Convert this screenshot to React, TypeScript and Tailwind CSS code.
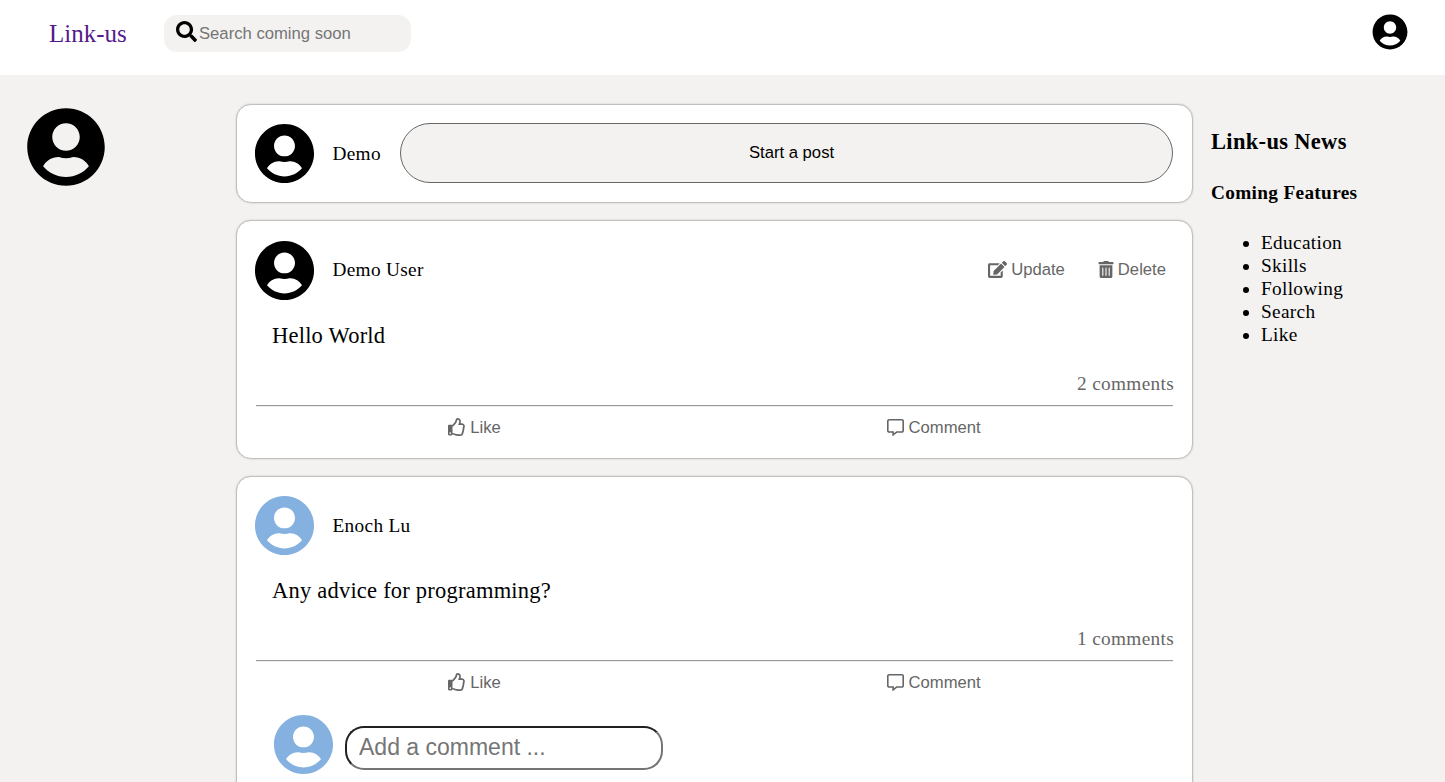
import type { ReactNode } from "react";
import {
  FaEdit,
  FaRegCommentAlt,
  FaRegThumbsUp,
  FaSearch,
  FaTrashAlt,
  FaUserCircle,
} from "react-icons/fa";

const features = ["Education", "Skills", "Following", "Search", "Like"];

function Card({ className = "", children }: { className?: string; children: ReactNode }) {
  return (
    <section
      className={`rounded-[15px] border border-[#c0c0c0] bg-white px-[18px] shadow-[0_0_2px_rgba(0,0,0,0.2)] ${className}`}
    >
      {children}
    </section>
  );
}

function Post({
  author,
  text,
  comments,
  own = false,
  avatarClass,
  className,
  children,
}: {
  author: string;
  text: string;
  comments: number;
  own?: boolean;
  avatarClass: string;
  className?: string;
  children?: ReactNode;
}) {
  return (
    <Card className={className}>
      <div className="flex h-[59px] items-center">
        <FaUserCircle className={`-m-px size-[61px] shrink-0 ${avatarClass}`} />
        <span className={own ? "mb-[2px] ml-[18.5px]" : "ml-[18.5px]"}>{author}</span>
        {own && (
          <div className="mb-[2px] ml-auto flex gap-[33px] pr-[8px] font-['Liberation_Sans',sans-serif] text-[16.67px] leading-[19px] tracking-normal text-[#666]">
            <button className="flex items-center gap-[4px]">
              <FaEdit className="h-[17px] w-[19px]" />
              Update
            </button>
            <button className="flex items-center gap-[4px]">
              <FaTrashAlt className="h-[17px] w-[16px]" />
              Delete
            </button>
          </div>
        )}
      </div>
      <p className="mt-[23px] ml-[17px] text-[22.5px] leading-[26px] tracking-[0.22px]">{text}</p>
      <p className="mt-[23px] text-right leading-[23px] text-[#666]">{comments} comments</p>
      <hr className="mt-[10px] mr-px ml-px border-t border-b border-t-[#999] border-b-[#eee]" />
      <div className="mt-[11px] flex justify-around font-['Liberation_Sans',sans-serif] text-[16.67px] leading-[20px] tracking-normal text-[#666]">
        <button className="flex items-center gap-[4px]">
          <FaRegThumbsUp className="mb-[2px] size-[18px]" />
          Like
        </button>
        <button className="flex items-center gap-[4px]">
          <FaRegCommentAlt className="mb-[2px] size-[17px]" />
          Comment
        </button>
      </div>
      {children}
    </Card>
  );
}

export default function App() {
  return (
    <div className="flex h-[782px] flex-col overflow-hidden bg-[#f3f2f0] font-['Liberation_Serif',serif] text-[19.3px] leading-[23px] tracking-[0.32px] text-black">
      <header className="flex h-[75px] shrink-0 items-start bg-white pl-[49px] pr-[37px] tracking-normal">
        <a className="mt-[19px] w-[115px] text-[25px] leading-[29px] text-[#551a8b]">Link-us</a>
        <div className="mt-[15px] flex h-[37px] w-[247px] items-center rounded-[13px] bg-[#f3f2f0] pl-[12px]">
          <FaSearch className="mb-[4px] size-[21px]" />
          <input
            placeholder="Search coming soon"
            className="ml-[2px] w-[190px] bg-transparent font-['Liberation_Sans',sans-serif] text-[16.67px] leading-[19px] outline-none placeholder:text-[#757575]"
          />
        </div>
        <FaUserCircle className="mt-[14px] ml-auto size-[36px]" />
      </header>
      <div className="flex min-h-0 flex-1 items-start">
        <aside className="w-[236px] shrink-0 pt-[32px] pl-[26px]">
          <FaUserCircle className="size-[80px]" />
        </aside>
        <main className="flex w-[957px] shrink-0 flex-col gap-[17px] pt-[29px]">
          <Card className="flex h-[99px] items-center">
            <FaUserCircle className="-m-px size-[61px] shrink-0" />
            <span className="ml-[18.5px] w-[67.5px]">Demo</span>
            <button className="mr-px mb-[2px] h-[60px] flex-1 rounded-full border border-[#666] bg-[#f3f2f0] pb-px pl-[10px] font-['Liberation_Sans',sans-serif] text-[16.67px] tracking-normal">
              Start a post
            </button>
          </Card>
          <Post
            author="Demo User"
            text="Hello World"
            comments={2}
            own
            avatarClass="text-black"
            className="h-[239px] pt-[20px]"
          />
          <Post
            author="Enoch Lu"
            text="Any advice for programming?"
            comments={1}
            avatarClass="text-[#84b1e0]"
            className="h-[340px] pt-[19px]"
          >
            <div className="mt-[22px] ml-[19px] flex items-center">
              <FaUserCircle className="-m-px size-[61px] text-[#84b1e0]" />
              <input
                placeholder="Add a comment ..."
                className="mt-[7px] ml-[12px] h-[44px] w-[318px] rounded-[19px] border-2 border-t-[#202020] border-r-[#757575] border-b-[#757575] border-l-[#202020] px-[12px] pb-[2px] font-['Liberation_Sans',sans-serif] text-[23px] tracking-normal outline-none placeholder:text-[#757575]"
              />
            </div>
          </Post>
        </main>
        <aside className="pt-[53px] pl-[18px]">
          <h3 className="text-[22.5px] leading-[27px] font-bold">Link-us News</h3>
          <h4 className="mt-[26px] leading-[23px] font-bold">Coming Features</h4>
          <ul className="mt-[27px] list-disc pl-[50px]">
            {features.map((feature) => (
              <li key={feature}>{feature}</li>
            ))}
          </ul>
        </aside>
      </div>
    </div>
  );
}
